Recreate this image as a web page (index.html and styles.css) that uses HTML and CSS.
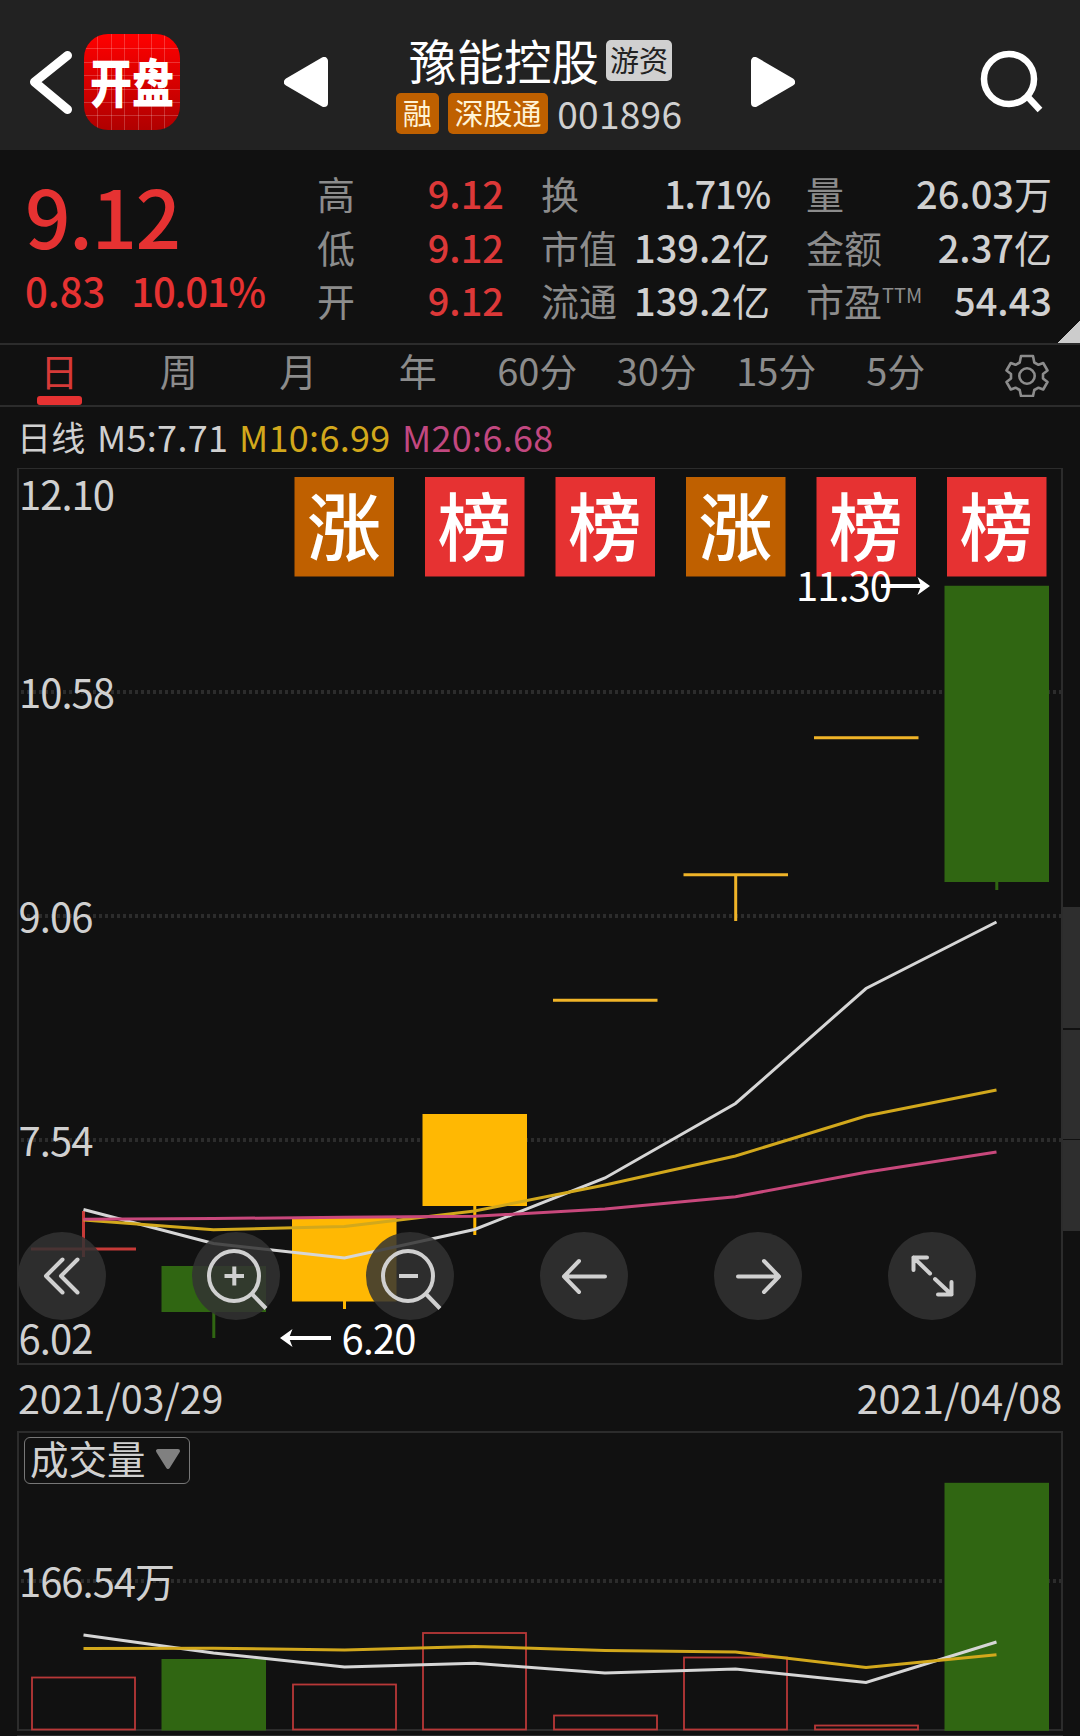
FILE: index.html
```
<!DOCTYPE html>
<html lang="zh-CN">
  <head>
    <meta charset="UTF-8" />
    <meta name="viewport" content="width=device-width, initial-scale=1.0" />
    <title>豫能控股 001896</title>

    <link rel="stylesheet" href="styles.css">
  </head>
  <body>
    <header class="topbar">
      <svg class="back" viewBox="0 0 44 66">
        <path d="M38.5 6.5L5.5 33l33 27.5" />
      </svg>
      <div class="logo"><span>开盘</span></div>
      <svg class="prev" viewBox="0 0 44 50">
        <path d="M4 25L40 4v42z" />
      </svg>
      <div class="stock">
        <div class="stock-name">豫能控股<span class="tag tag-grey">游资</span></div>
        <div class="stock-code">
          <span class="tag">融</span>
          <span class="tag">深股通</span>
          <span class="code">001896</span>
        </div>
      </div>
      <svg class="next" viewBox="0 0 44 50">
        <path d="M40 25L4 4v42z" />
      </svg>
      <svg class="search" viewBox="0 0 64 64">
        <circle cx="29" cy="29" r="25" />
        <path d="M47 46l13 14" />
      </svg>
    </header>

    <section class="quote">
      <div class="price">
        <div class="last">9.12</div>
        <div class="change"><span>0.83</span><span class="percent">10.01%</span></div>
      </div>
      <dl class="stats stats-a">
        <dt>高</dt><dd>9.12</dd>
        <dt>低</dt><dd>9.12</dd>
        <dt>开</dt><dd>9.12</dd>
      </dl>
      <dl class="stats stats-b">
        <dt>换</dt><dd class="percent">1.71%</dd>
        <dt>市值</dt><dd>139.2<i>亿</i></dd>
        <dt>流通</dt><dd>139.2<i>亿</i></dd>
      </dl>
      <dl class="stats stats-c">
        <dt>量</dt><dd>26.03<i>万</i></dd>
        <dt>金额</dt><dd>2.37<i>亿</i></dd>
        <dt>市盈<sup>TTM</sup></dt><dd>54.43</dd>
      </dl>
      <div class="corner"></div>
    </section>

    <nav class="tabs">
      <a class="tab active">日</a>
      <a class="tab">周</a>
      <a class="tab">月</a>
      <a class="tab">年</a>
      <a class="tab">60分</a>
      <a class="tab">30分</a>
      <a class="tab">15分</a>
      <a class="tab">5分</a>
      <svg class="gear" viewBox="0 0 44 44">
        <path d="M16 3h12l1.3 6.5 4.2 2.3 4.7-1.8 4.3 7.5-4.5 3.5v4.5l4.5 3.5-4.3 7.5-4.7-1.8-4.2 2.3L28 43H16l-1.3-6-4.2-2.3L5.8 36.5 1.5 29 6 25.5V21l-4.500-3.500L5.8 10l4.700 1.800 4.200-2.300z" />
        <circle cx="22" cy="23" r="7.7" />
      </svg>
    </nav>

    <div class="averages">
      <span class="avg-title">日线</span>
      <span class="avg5">M5:7.71</span>
      <span class="avg10">M10:6.99</span>
      <span class="avg20">M20:6.68</span>
    </div>

    <section class="kline">
      <svg class="chart" viewBox="0 468 1080 897">
        <g class="frame">
          <path d="M18 468v896h1044V468" />
          <path class="thin" d="M17 468.5h1046" />
        </g>
        <g class="grid">
          <path d="M21 692h1040" />
          <path d="M21 916h1040" />
          <path d="M21 1140h1040" />
        </g>

        <g class="event">
          <rect class="orange" x="294.5" y="477" width="99.5" height="99.5" />
          <rect x="425" y="477" width="99.5" height="99.5" />
          <rect x="555.5" y="477" width="99.5" height="99.5" />
          <rect class="orange" x="686" y="477" width="99.5" height="99.5" />
          <rect x="816.5" y="477" width="99.5" height="99.5" />
          <rect x="947" y="477" width="99.5" height="99.5" />
          <text x="344" y="555">涨</text>
          <text x="474.5" y="555">榜</text>
          <text x="605" y="555">榜</text>
          <text x="735.5" y="555">涨</text>
          <text x="866" y="555">榜</text>
          <text x="996.5" y="555">榜</text>
        </g>

        <g class="candles">
          <path class="line-red" d="M31 1249h105M83.5 1211v46" />
          <path class="green" d="M161.5 1266H266v46H161.5zM212.3 1312h3v26h-3z" />
          <path class="yellow" d="M292 1217.5h104.5v84H292zM343 1301h3v8h-3z" />
          <path class="yellow" d="M422.5 1114H527v92H422.5zM473.3 1206h3v29h-3z" />
          <path class="line-yellow" d="M553 1000.3h104.5" />
          <path class="line-yellow" d="M683.5 874.8H788M735.7 875v46" />
          <path class="line-yellow" d="M814 737.7h104.5" />
          <path class="green" d="M944.5 585.8H1049V882H944.5zM995.3 882h3v8h-3z" />
        </g>

        <g class="ma">
          <polyline class="ma5" points="83.5,1209.5 213.5,1243.5 344.5,1258 474.5,1229.5 605,1178 735.5,1103.5 866,988.5 996.5,922" />
          <polyline class="ma10" points="83.5,1220 213.5,1229.7 344.5,1226.5 474.5,1211 605,1185 735.5,1156 866,1116 996.5,1090" />
          <polyline class="ma20" points="83.5,1219.3 213.5,1218.5 344.5,1217.3 474.5,1216.3 605,1209 735.5,1196.7 866,1172.3 996.5,1152" />
        </g>

        <g class="scale">
          <text x="19" y="509.5" textLength="96">12.10</text>
          <text x="19" y="707.5" textLength="96">10.58</text>
          <text x="18.5" y="931.5" textLength="75">9.06</text>
          <text x="18.5" y="1155.5" textLength="75">7.54</text>
          <text x="18.5" y="1353.5" textLength="75">6.02</text>
        </g>

        <g class="marker">
          <text x="796" y="601" textLength="96">11.30</text>
          <path class="stem" d="M881 586h44" />
          <path d="M930 586l-12.5-9 3.5 9-3.5 9z" />
          <text x="341.5" y="1353.5" textLength="75">6.20</text>
          <path class="stem" d="M331 1338h-46" />
          <path d="M280 1338l12.5-9-3.5 9 3.5 9z" />
        </g>
      </svg>

      <div class="tools">
        <svg viewBox="0 0 88 88"><path d="M44.5 27.5L28 44l16.5 16.5M59.5 27.5L43 44l16.5 16.5" /></svg>
        <svg class="flat" viewBox="0 0 88 88"><circle cx="42" cy="44" r="25" /><path d="M60 62l14 14.5M32.5 44h19.5M42.3 34.5v19" /></svg>
        <svg class="flat" viewBox="0 0 88 88"><circle cx="42" cy="44" r="25" /><path d="M60 62l14 14.5M33 44h19" /></svg>
        <svg viewBox="0 0 88 88"><path d="M65 44.5H24M39 29L24 44.5 39 60" /></svg>
        <svg viewBox="0 0 88 88"><path d="M24 44.5h41M50 29l15 15.5L50 60" /></svg>
        <svg viewBox="0 0 88 88"><path d="M39 25.5H25.5V38M25.5 25.5L42 41.5M47 47l16.5 15.5M63.5 50v12.5H50" /></svg>
      </div>

      <div class="side-handle"><i></i><i></i><i></i></div>
    </section>

    <div class="dates">
      <span>2021/03/29</span>
      <span>2021/04/08</span>
    </div>

    <section class="volume">
      <svg class="chart" viewBox="0 1431 1080 305">
        <g class="frame">
          <path d="M18 1432h1044v298H18z" />
          <path class="thin" d="M17 1735.5h1046" />
        </g>
        <g class="grid">
          <path d="M21 1581h1040" />
        </g>
        <g class="bars">
          <rect class="hollow" x="32" y="1677.5" width="103" height="52" />
          <rect class="green" x="161.5" y="1659" width="104.5" height="71.5" />
          <rect class="hollow" x="293" y="1684.5" width="103" height="45" />
          <rect class="hollow" x="423" y="1633" width="103" height="96.5" />
          <rect class="hollow" x="554" y="1715.5" width="103" height="14" />
          <rect class="hollow" x="684" y="1657.5" width="103" height="72" />
          <rect class="hollow" x="815" y="1725.5" width="103" height="4" />
          <rect class="green" x="944.5" y="1482.8" width="104.5" height="248" />
        </g>
        <g class="ma">
          <polyline class="ma5" points="83.5,1635 213.5,1653 344.5,1667 474.5,1663.3 605,1673 735.5,1669 866,1682.5 996.5,1642" />
          <polyline class="ma10" points="83.5,1648.5 213.5,1648.3 344.5,1650 474.5,1646.5 605,1650.5 735.5,1652 866,1667.5 996.5,1654.7" />
        </g>
        <g class="scale">
          <text x="19" y="1596.5" textLength="156">166.54万</text>
        </g>
      </svg>
      <div class="picker">
        <span>成交量</span>
        <svg viewBox="0 0 26 22"><path d="M3 3h20L13 19z" /></svg>
      </div>
    </section>
  </body>
</html>
```
FILE: styles.css
```
* {
  box-sizing: border-box;
}

body {
  width: 1080px;
  height: 1736px;
  margin: 0;
  overflow: hidden;
  background-color: #111;
  color: #d0d0d0;
  font-family: "Noto Sans CJK SC", sans-serif;
}

svg {
  display: block;
  flex: none;
}

/* header */
.topbar {
  display: flex;
  align-items: center;
  height: 150px;
  padding: 14px 36px 0 29px;
  background-color: #222;
}

.back {
  width: 44px;
  height: 66px;
  fill: none;
  stroke: #fff;
  stroke-width: 9;
  stroke-linecap: round;
  stroke-linejoin: round;
}

.logo {
  display: flex;
  align-items: center;
  justify-content: center;
  width: 96px;
  height: 96px;
  margin-left: 11px;
  border-radius: 24px;
  background:
    repeating-linear-gradient(90deg, transparent 0 12.4px, rgba(255, 255, 255, 0.2) 12.4px 13.4px) 1px 0 / 82px 100% no-repeat,
    repeating-linear-gradient(transparent 0 12.4px, rgba(255, 255, 255, 0.2) 12.4px 13.4px) 0 2px / 100% 82px no-repeat,
    linear-gradient(#f00, #b00000);
  color: #fff;
}

.logo span {
  font-size: 42px;
  font-weight: 900;
  line-height: 1;
  transform: translateY(-2px) scaleY(1.25);
}

.prev,
.next {
  width: 44px;
  height: 50px;
  fill: #fff;
  stroke: #fff;
  stroke-width: 8;
  stroke-linejoin: round;
}

.prev {
  margin-left: 104px;
}

.stock {
  width: 287px;
  height: 96px;
  margin: 0 68px;
  flex: none;
}

.stock-name {
  display: flex;
  align-items: center;
  height: 52px;
  margin: 0 0 7px 13px;
  color: #fff;
  font-size: 47.5px;
  line-height: 68px;
  white-space: nowrap;
}

.stock-code {
  display: flex;
  align-items: center;
  height: 41px;
  gap: 9px;
  white-space: nowrap;
}

.tag {
  flex: none;
  height: 41px;
  padding: 0 6.8px;
  border-radius: 5px;
  background-color: #bf6000;
  color: #fff3d6;
  font-size: 29px;
  line-height: 39px;
}

.tag-grey {
  margin: 1px 0 0 7px;
  padding: 0 4px;
  background-color: #d0d0d0;
  color: #222;
}

.code {
  font-size: 37px;
  line-height: 36px;
  padding-bottom: 2px;
  letter-spacing: 0.3px;
}

.search {
  width: 64px;
  height: 64px;
  margin-left: auto;
  fill: none;
  stroke: #fff;
  stroke-width: 6.5;
}

/* quote */
.quote {
  position: relative;
  display: flex;
  height: 195px;
  border-bottom: 2px solid #2c2c2c;
}

.price {
  width: 317px;
  padding: 19px 0 0 25px;
  color: #e63232;
  font-weight: 500;
}

.last {
  height: 89px;
  font-size: 80px;
  line-height: 91px;
  letter-spacing: -1.5px;
}

.change {
  display: flex;
  gap: 26px;
  font-size: 40px;
  line-height: 65px;
}

.percent {
  letter-spacing: -1.2px;
}

.stats {
  display: grid;
  grid-template-columns: 76px 1fr;
  grid-auto-rows: 53.5px;
  align-content: start;
  margin: 0;
  padding-top: 16px;
  font-size: 38px;
  line-height: 53px;
  white-space: nowrap;
}

.stats dt {
  color: #8c8c8c;
}

.stats dd {
  margin: 0;
  font-weight: 500;
  text-align: right;
}

.stats i {
  font-style: normal;
  font-weight: 400;
}

.stats sup {
  font-size: 20px;
  line-height: 1;
  vertical-align: 13px;
}

.stats-a {
  width: 187px;
}

.stats-a dd {
  color: #dc3838;
}

.stats-b {
  width: 229px;
  margin-left: 37px;
}

.stats-c {
  width: 246px;
  margin-left: 36px;
}

.corner {
  position: absolute;
  right: 0;
  bottom: 0;
  width: 22px;
  height: 22px;
  background: linear-gradient(135deg, transparent 50%, #ccc 50%);
}

/* period tabs */
.tabs {
  display: flex;
  align-items: center;
  height: 62px;
  border-bottom: 2px solid #2c2c2c;
}

.tab {
  position: relative;
  width: 119.5px;
  height: 60px;
  color: #8c8c8c;
  font-size: 38px;
  line-height: 50px;
  text-align: center;
  text-indent: -1px;
}

.tab.active {
  color: #d63a38;
}

.tab.active::after {
  content: "";
  position: absolute;
  left: 37px;
  bottom: 0;
  width: 45px;
  height: 9px;
  border-radius: 3px;
  background-color: #e63232;
}

.gear {
  width: 44px;
  height: 44px;
  margin-left: 49px;
  fill: none;
  stroke: #8c8c8c;
  stroke-width: 2.6;
  stroke-linejoin: round;
}

.averages {
  display: flex;
  height: 61px;
  padding-left: 17px;
  font-size: 36px;
  line-height: 59px;
  letter-spacing: 0.3px;
  white-space: nowrap;
}

.avg-title {
  width: 80px;
  font-size: 34px;
}

.avg5 {
  width: 142px;
}

.avg10 {
  width: 163px;
  color: #d2a81c;
}

.avg20 {
  color: #c24880;
}

/* charts */
.kline,
.volume {
  position: relative;
}

.chart {
  width: 100%;
}

.frame path {
  fill: none;
  stroke: #2c2c2c;
  stroke-width: 2;
}

.frame .thin {
  stroke-width: 1;
}

.grid path {
  stroke: #2c2c2c;
  stroke-width: 4;
  stroke-dasharray: 3 3;
}

.event rect {
  fill: #e63232;
}

.event .orange {
  fill: #bf6000;
}

.event text {
  fill: #fff;
  font-size: 74px;
  font-weight: 500;
  text-anchor: middle;
}

.green {
  fill: #306612;
}

.yellow {
  fill: #ffb803;
}

.line-red,
.line-yellow {
  fill: none;
  stroke: #c63a38;
  stroke-width: 3;
}

.line-yellow {
  stroke: #f0b428;
}

.hollow {
  fill: none;
  stroke: #b83838;
  stroke-width: 1.8;
}

.ma polyline {
  fill: none;
  stroke-width: 3;
}

.ma .ma5 {
  stroke: #d6d6d6;
}

.ma .ma10 {
  stroke: #d2a81c;
}

.ma .ma20 {
  stroke: #c8487c;
}

.scale text {
  fill: #d0d0d0;
  font-size: 40px;
}

.marker {
  fill: #fff;
  font-size: 40px;
}

.marker .stem {
  stroke: #fff;
  stroke-width: 4;
}

.tools {
  position: absolute;
  left: 18px;
  top: 764px;
  display: flex;
  gap: 86px;
}

.tools svg {
  width: 88px;
  height: 88px;
  border-radius: 50%;
  background-color: rgba(51, 51, 51, 0.85);
  fill: none;
  stroke: #d0d0d0;
  stroke-width: 4;
  stroke-linecap: round;
  stroke-linejoin: round;
}

.tools .flat {
  overflow: visible;
  stroke-linecap: butt;
}

.side-handle {
  position: absolute;
  right: 0;
  top: 439px;
  width: 17px;
  height: 324px;
  display: grid;
  grid-template-rows: 121px 109px 1fr;
  gap: 1.5px;
}

.side-handle i {
  background-color: #2e2e2e;
}

.dates {
  display: flex;
  justify-content: space-between;
  height: 66px;
  padding: 0 18px;
  font-size: 39.5px;
  line-height: 64px;
  letter-spacing: -0.1px;
}

.picker {
  position: absolute;
  left: 24px;
  top: 6px;
  display: flex;
  align-items: center;
  justify-content: space-between;
  width: 166px;
  height: 47px;
  padding: 0 8px 0 5px;
  border: 1.5px solid #777;
  border-radius: 6px;
  font-size: 38.5px;
  line-height: 38px;
}

.picker span {
  padding-bottom: 7px;
}

.picker svg {
  width: 26px;
  height: 22px;
  margin-top: -3px;
  fill: #808080;
  stroke: #808080;
  stroke-width: 4;
  stroke-linejoin: round;
}
```
